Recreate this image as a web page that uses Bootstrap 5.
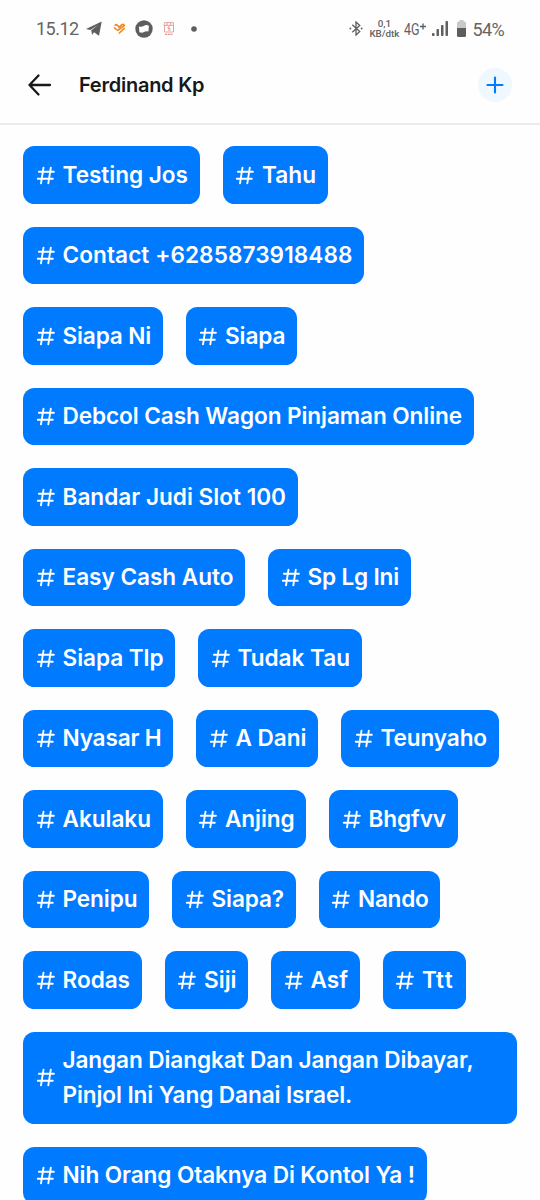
<!DOCTYPE html>
<html lang="id">
<head>
<meta charset="utf-8">
<meta name="viewport" content="width=device-width, initial-scale=1">
<title>Ferdinand Kp</title>
<link href="https://cdn.jsdelivr.net/npm/bootstrap@5.3.0/dist/css/bootstrap.min.css" rel="stylesheet">
<style>
body{font-family:Inter,"Liberation Sans",sans-serif;background:#fefefe;height:1200px;overflow:hidden}
svg{display:block;flex:none}
.status{height:57px;padding:0 36px;font-family:Roboto,sans-serif;color:#646464;font-size:18px;line-height:20px}
.clock{width:43px;letter-spacing:-.5px}
.rate{width:30px;font-size:9.8px;line-height:10px;font-weight:500;white-space:nowrap}
.topbar{height:68px;padding:0 28px 11px 26px;border-bottom:2px solid #ececed}
.title{font-size:20px;font-weight:600;color:#17181a;letter-spacing:-.25px;line-height:28px;margin-left:27px}
.add{width:34px;height:34px;background:#eff7ff;border:0}
.tags{padding:21.3px 23px 0;gap:23px}
.tag{background:#007aff;color:#fff;border-radius:11.5px;padding:11.5px;gap:5px;font-size:22.6px;line-height:34.5px;font-weight:600;font-variant-ligatures:none}
.tag span{white-space:nowrap}
.tag.multi{letter-spacing:-.1px}
.tag.multi span{white-space:normal}
</style>
</head>
<body>
<svg width="0" height="0" class="position-absolute" aria-hidden="true">
  <symbol id="hash" viewBox="0 0 23 23"><path d="M3.9 7.7H18.9M2.8 14.8H17.8M8.5 3.6 6 19.3M15.8 3.6 13.3 19.3" fill="none" stroke="#fff" stroke-width="1.9" stroke-linecap="round"/></symbol>
</svg>
<div class="status d-flex align-items-center">
  <span class="clock">15.12</span>
  <svg width="16" height="15" viewBox="0 0 16 15" style="margin-left:7px"><path d="M0 8 15.7.5 13 14.8 8 11.2 6 14 5.5 10 12 4 4.2 9Z" fill="#5e5e5e"/><path d="M5 9.5 12 4 7 11Z" fill="#5e5e5e"/></svg>
  <svg width="13" height="12" viewBox="0 0 13 12" style="margin-left:11px"><path d="M1.6 4.8 3.4 6.5M2.2 2.2Q3.2 1 4.4 2.3L6.3 4.2 8.6 1.9Q10.2.8 11.2 2.2M4.8 7.3 11.3 2.6M6.4 10 11.2 5.4" fill="none" stroke="#f18a24" stroke-width="1.7" stroke-linecap="round"/></svg>
  <svg width="18" height="18" viewBox="0 0 18 18" style="margin-left:9px"><circle cx="9" cy="9" r="8.7" fill="#5e5e5e"/><path d="M3.9 6.4Q6.5 7.4 9 5.8T13.9 5.8L13.4 11.6Q10.8 10.8 9 12T4.4 12.2Z" fill="#fff"/></svg>
  <svg width="12" height="14" viewBox="0 0 12 14" style="margin-left:10px"><path d="M1.5.6H10.5V3.4H1ZM1.5 3.4V10H10.5V3.4M4 .6V3.4M7.7.6V3.4M7 5H5V6.5H7V8.2H4.8" fill="none" stroke="#e08d87" stroke-width=".8"/><path d="M2 12.4H10" stroke="#e08d87" stroke-width="1.4" stroke-dasharray="2 .7"/></svg>
  <svg width="6" height="6" viewBox="0 0 6 6" style="margin-left:16px"><circle cx="3" cy="3" r="2.8" fill="#5e5e5e"/></svg>
  <svg class="ms-auto" width="14" height="15" viewBox="0 0 14 16"><path d="M3 4 11 11.3 7 15V1L11 4.7 3 12" fill="none" stroke="#606060" stroke-width="1.4"/><circle cx="1" cy="8" r="1" fill="#606060"/><circle cx="13" cy="8" r="1" fill="#606060"/></svg>
  <span class="rate text-center" style="margin-left:6px"><span class="d-block">0,1</span><span class="d-block">KB/dtk</span></span>
  <svg width="23" height="20" viewBox="0 0 23 20" style="margin-left:5px" fill="#606060"><text x="0" y="16" font-size="16" textLength="15.5" lengthAdjust="spacingAndGlyphs">4G</text><path d="M16 7.5H22M19 4.5V10.5" stroke="#606060" stroke-width="1.4"/></svg>
  <svg width="17" height="15" viewBox="0 0 17 15" style="margin-left:5px" fill="#606060"><rect y="12" width="2.5" height="3" rx=".8"/><rect x="4.5" y="8" width="2.5" height="7" rx=".8"/><rect x="9" y="4" width="2.5" height="11" rx=".8"/><rect x="13.5" y="0" width="2.5" height="15" rx=".8"/></svg>
  <svg width="9" height="17" viewBox="0 0 9 17" style="margin-left:8px"><path d="M2.5 1.5V0H6.5V1.5H7.5Q9 1.5 9 3V8H0V3Q0 1.5 1.5 1.5Z" fill="#c8c8c8"/><path d="M0 8H9V15.5Q9 17 7.5 17H1.5Q0 17 0 15.5Z" fill="#5d5d5d"/></svg>
  <span style="margin:2px 0 0 6px;letter-spacing:-.6px">54%</span>
</div>
<header class="topbar d-flex align-items-center">
  <svg width="26" height="26" viewBox="0 0 26 26"><path d="M24 13H3.5M12.5 3.5 3.5 13 12.5 22.5" fill="none" stroke="#17181a" stroke-width="2.3" stroke-linecap="round" stroke-linejoin="round"/></svg>
  <h1 class="title mb-0">Ferdinand Kp</h1>
  <button class="add btn rounded-circle p-0 ms-auto d-flex align-items-center justify-content-center" aria-label="Tambah"><svg width="18" height="18" viewBox="0 0 18 18"><path d="M9 1.5V16.5M1.5 9H16.5" stroke="#007aff" stroke-width="2.1" stroke-linecap="round"/></svg></button>
</header>
<main class="tags d-flex flex-wrap" id="tags"></main>
<script>
// Each entry: label and chip width; 0 lets a long label wrap.
const tags=[["Testing Jos",176.5],["Tahu",105],["Contact +6285873918488",341],["Siapa Ni",139.5],["Siapa",111.5],["Debcol Cash Wagon Pinjaman Online",450.5],["Bandar Judi Slot 100",274.5],["Easy Cash Auto",222],["Sp Lg Ini",142.5],["Siapa Tlp",152],["Tudak Tau",163.5],["Nyasar H",150],["A Dani",122],["Teunyaho",157.5],["Akulaku",139.5],["Anjing",120.5],["Bhgfvv",128.5],["Penipu",126],["Siapa?",123.5],["Nando",121.5],["Rodas",118.5],["Siji",83.5],["Asf",88.5],["Ttt",83],["Jangan Diangkat Dan Jangan Dibayar, Pinjol Ini Yang Danai Israel.",0],["Nih Orang Otaknya Di Kontol Ya !",403.5]];
const box=document.getElementById("tags");
box.innerHTML=tags.map(([n,w])=>`<div class="tag d-inline-flex align-items-center${w?"":" multi"}"><svg width="23" height="23"><use href="#hash"/></svg><span>${n}</span></div>`).join("");
// Track each label so that it fills its chip.
[...box.children].forEach((el,i)=>{
  const [n,w]=tags[i];
  if(!w)return;
  el.style.letterSpacing="0px";
  const natural=el.lastElementChild.getBoundingClientRect().width;
  el.style.letterSpacing=((w-51-natural)/n.length).toFixed(3)+"px";
  el.style.width=w+"px";
});
</script>
<script src="https://cdn.jsdelivr.net/npm/bootstrap@5.3.0/dist/js/bootstrap.bundle.min.js"></script>
</body>
</html>
